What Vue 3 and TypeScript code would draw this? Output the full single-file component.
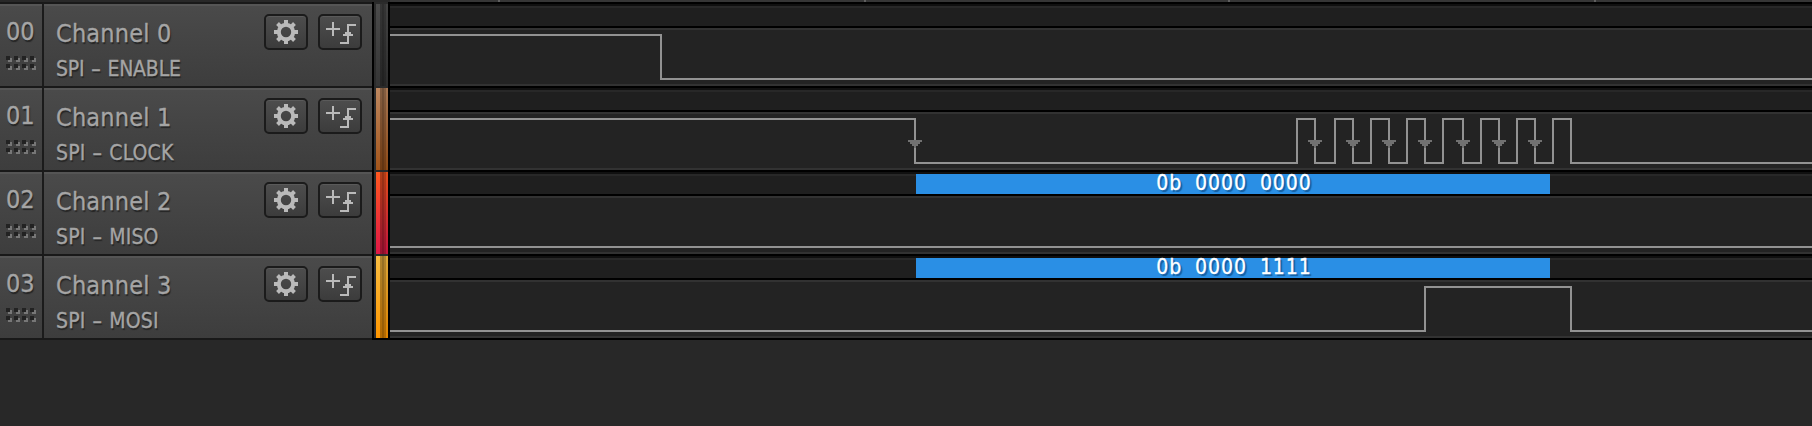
<script setup lang="ts">
interface Channel {
  id: string
  name: string
  role: string
  tone: string
  start: 0 | 1
  edges: number[]
  marks: number[]
  value?: string
}

const HIGH = 33
const LOW = 77
const ORIGIN = 390
const WIDTH = 1422

const clock = [915, 1297, 1315, 1335, 1353, 1371, 1389, 1407, 1425, 1443, 1463, 1481, 1499, 1517, 1535, 1553, 1571]

const channels: Channel[] = [
  { id: '00', name: 'Channel 0', role: 'SPI – ENABLE', tone: 'black', start: 1, edges: [661], marks: [] },
  {
    id: '01', name: 'Channel 1', role: 'SPI – CLOCK', tone: 'brown', start: 1, edges: clock,
    marks: clock.filter((_, i) => i % 2 === 0 && i < 16),
  },
  { id: '02', name: 'Channel 2', role: 'SPI – MISO', tone: 'red', start: 0, edges: [], marks: [], value: '0b 0000 0000' },
  { id: '03', name: 'Channel 3', role: 'SPI – MOSI', tone: 'orange', start: 0, edges: [1425, 1571], marks: [], value: '0b 0000 1111' },
]

function wave(c: Channel): string {
  let level = c.start
  let d = `M0 ${level ? HIGH : LOW}`
  for (const x of c.edges) {
    level = level ? 0 : 1
    d += `H${x - ORIGIN}V${level ? HIGH : LOW}`
  }
  return d + `H${WIDTH}`
}

function arrow(x: number): string {
  const l = x - ORIGIN
  return `M${l - 7} 54h14v2h-2v2h-2v2h-2v2h-2v-2h-2v-2h-2v-2h-2z`
}

const ticks = [498, 864, 1228, 1594]
const teeth = [0, 45, 90, 135, 180, 225, 270, 315]
const dots = Array.from({ length: 8 }, (_, i) => ({ x: (i % 4) * 8, y: Math.floor(i / 4) * 8 }))
</script>

<template>
  <main class="analyzer">
    <div class="ruler">
      <svg width="1812" height="2">
        <rect x="390" y="0" width="1422" height="2" fill="#363636" />
        <rect v-for="t in ticks" :key="t" :x="t" y="0" width="2" height="2" fill="#606060" />
      </svg>
    </div>
    <section v-for="c in channels" :key="c.id" class="row">
      <div class="index">
        <span class="number">{{ c.id }}</span>
        <svg class="grip" width="30" height="14" shape-rendering="crispEdges">
          <g v-for="(p, i) in dots" :key="i">
            <rect :x="p.x + 2" :y="p.y + 2" width="4" height="4" fill="#777" />
            <rect :x="p.x" :y="p.y" width="4" height="4" fill="#222" />
          </g>
        </svg>
      </div>
      <div class="info">
        <div class="labels">
          <div class="name">{{ c.name }}</div>
          <div class="role" :class="{ tight: c.id === '00' }">{{ c.role }}</div>
        </div>
        <button class="tool" aria-label="Settings">
          <svg width="40" height="32" viewBox="-20 -16 40 32">
            <circle r="7.2" fill="none" stroke="#bababa" stroke-width="4" />
            <rect v-for="a in teeth" :key="a" x="-2" y="-12" width="4" height="4" fill="#bababa" :transform="`rotate(${a})`" />
          </svg>
        </button>
        <button class="tool" aria-label="Add trigger">
          <svg width="40" height="32" viewBox="0 0 40 32">
            <path d="M6 13H20M13 6V20M36 9H28V27H20" fill="none" stroke="#bababa" stroke-width="2" />
            <path d="M27 14h2v2h2v2h2v2H23v-2h2v-2h2z" fill="#bababa" />
          </svg>
        </button>
      </div>
      <div class="stripe"><div class="tone" :class="c.tone"></div></div>
      <div class="track">
        <svg class="signal" :width="WIDTH" height="84">
          <path :d="wave(c)" fill="none" stroke="#929292" stroke-width="2" shape-rendering="crispEdges" />
          <path v-for="m in c.marks" :key="m" :d="arrow(m)" fill="#717171" shape-rendering="crispEdges" />
        </svg>
        <div v-if="c.value" class="value">{{ c.value }}</div>
      </div>
    </section>
    <div class="end"></div>
  </main>
</template>

<style>
html, body { background: #282828; overflow: hidden; }
</style>

<style scoped>
.analyzer {
  width: 1812px;
  height: 426px;
  background: #282828;
  font-family: "DejaVu Sans Condensed", "DejaVu Sans", sans-serif;
  font-stretch: condensed;
  color: #a5a5a5;
  overflow: hidden;
}
.ruler { height: 2px; background: #282828; }
.ruler svg { display: block; }
.row { display: flex; height: 84px; }
.index, .info {
  box-sizing: border-box;
  height: 84px;
  border-top: 2px solid #191919;
  background: linear-gradient(#555 0 2px, #4a4a4a 2px, #3d3d3d);
}
.index { width: 44px; border-right: 2px solid #1b1b1b; }
.number {
  display: block;
  margin: 13px 0 0 6px;
  font-size: 25px;
  line-height: 30px;
  -webkit-text-stroke: 0.3px #a5a5a5;
  text-shadow: 1px 2px 1px #252525;
}
.grip { display: block; margin: 9px 0 0 6px; }
.info { width: 328px; display: flex; padding: 10px 10px 0 12px; gap: 10px; }
.labels {
  flex: 1;
  white-space: nowrap;
  -webkit-text-stroke: 0.3px #a5a5a5;
  text-shadow: 1px 2px 1px #252525;
}
.name { margin-top: 5px; font-size: 25px; line-height: 30px; letter-spacing: 0.2px; }
.role { margin-top: 8px; font-size: 21px; line-height: 24px; letter-spacing: 0.15px; word-spacing: 1px; }
.role.tight { letter-spacing: -0.17px; }
.tool {
  box-sizing: border-box;
  width: 44px;
  height: 36px;
  padding: 0;
  border: 2px solid #1b1b1b;
  border-radius: 5px;
  background: linear-gradient(#4d4d4d, #3c3c3c);
  box-shadow: inset 0 1px #5a5a5a;
}
.tool svg { display: block; }
.stripe {
  box-sizing: border-box;
  width: 18px;
  padding: 2px 2px 0 4px;
  background: linear-gradient(90deg, #000 0 2px, #2b2b2b 2px 16px, #000 16px);
}
.tone { height: 82px; position: relative; }
.tone::after {
  content: "";
  position: absolute;
  inset: 0;
  background: linear-gradient(90deg, transparent 0 4px, #0000004d 4px 6px, #00000066 6px 8px, #0000004d 8px 10px, #00000020 10px);
}
.black { background: linear-gradient(#4b4b4b, #353535); }
.brown { background: linear-gradient(#bd875f, #a4551a); }
.red { background: linear-gradient(#ff581f, #df1746); }
.orange { background: linear-gradient(#f9bd42, #ff9600); }
.track {
  position: relative;
  width: 1422px;
  height: 84px;
  background: linear-gradient(#000 0 2px, #101010 2px 4px, #282828 4px 6px, #1f1f1f 6px 24px, #000 24px 26px, #323232 26px 28px, #232323 28px 82px, #323232 82px);
}
.signal { position: absolute; inset: 0; display: block; }
.value {
  box-sizing: border-box;
  position: absolute;
  left: 526px;
  top: 4px;
  width: 634px;
  height: 20px;
  padding-left: 2px;
  background: #2a8fe5;
  color: #fff;
  font-size: 21px;
  line-height: 18px;
  letter-spacing: 0.95px;
  word-spacing: 6px;
  text-align: center;
  -webkit-text-stroke: 0.3px #fff;
  text-shadow: 2px 2px 1px #145d9e;
}
.end { height: 2px; background: linear-gradient(90deg, #191919 0 372px, #000 372px); }
</style>
